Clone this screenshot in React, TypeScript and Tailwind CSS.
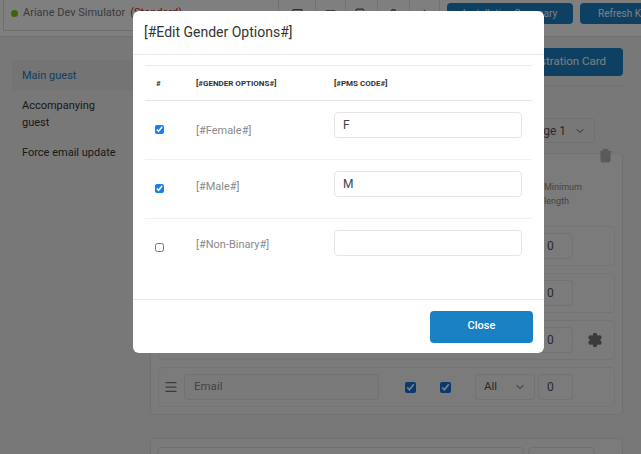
import { ArrowUp, ChevronDown, Copy, Menu, Settings, Square, Trash2, User } from 'lucide-react'

function FieldRow({ label, gear }: { label: string; gear?: boolean }) {
  return (
    <div className="flex h-[40px] items-center rounded-sm border border-[#e8e8e8] pl-[6px]">
      <Menu className="h-[12px] w-[12px] scale-125 text-[#777]" />
      <div className="ml-[7px] flex h-[26px] w-[195px] items-center rounded border border-[#e4e4e4] bg-[#f4f4f4] pl-[9px] text-[11.5px] text-[#888]">
        {label}
      </div>
      <input type="checkbox" readOnly checked className="ml-[26px] h-[11px] w-[11px] accent-[#1273de]" />
      <input type="checkbox" readOnly checked className="ml-[24px] h-[11px] w-[11px] accent-[#1273de]" />
      <div className="ml-[24px] flex h-[26px] w-[60px] items-center justify-between rounded border border-[#e4e4e4] px-2 text-[11.5px] text-[#555]">
        All
        <ChevronDown className="h-3 w-3" />
      </div>
      <div className="ml-[3px] flex h-[26px] w-[35px] items-center rounded border border-[#e4e4e4] pl-2 text-[12px] text-[#555]">0</div>
      {gear && <Settings className="ml-[14px] h-[16px] w-[16px] fill-[#777] text-[#777]" />}
    </div>
  )
}

function OptionRow({ checked, label, code, labelClass }: { checked: boolean; label: string; code: string; labelClass: string }) {
  return (
    <div className="flex h-[59px] border-b border-[#f0f0f0] last:border-b-0">
      <div className="w-[51px] pt-[24px] pl-[10px]">
        <input type="checkbox" readOnly checked={checked} className="block h-[9px] w-[9px] accent-[#1a7fe8]" />
      </div>
      <div className={`w-[138px] text-[11px] text-[#8a8a8a] ${labelClass}`}>{label}</div>
      <div className="pt-[11px]">
        <div className="flex h-[26px] w-[188px] items-center rounded border border-[#e4e4e4] bg-white pl-2 text-[12px] text-[#444]">
          {code}
        </div>
      </div>
    </div>
  )
}

const topIcons = [
  { Icon: Square, cell: 'w-[37px]' },
  { Icon: Menu, cell: 'w-[30px]' },
  { Icon: Copy, cell: 'w-[32px]' },
  { Icon: User, cell: 'w-[32px]' },
  { Icon: ArrowUp, cell: 'w-[30px]' },
]

export default function App() {
  return (
    <div className="relative h-[454px] w-[641px] overflow-hidden bg-[#f0f0f0] font-['Roboto',sans-serif] text-[#333]">
      {/* page behind the dialog */}
      <div className="flex h-[37px] border-b border-[#e5e5e5] bg-white">
        <div className="ml-[3px] flex h-[31px] w-[276px] items-center border-r border-b border-l border-[#ddd] pb-[3px] pl-[7px] text-[11px] text-[#777]">
          <span className="h-[7px] w-[7px] rounded-full bg-[#7ac70c]" />
          <span className="ml-[5px]">Ariane Dev Simulator</span>
          <span className="ml-[5px] text-[#c62828]">(Standard)</span>
        </div>
        {topIcons.map(({ Icon, cell }, i) => (
          <div key={i} className={`flex h-[36px] justify-center border-r border-[#e5e5e5] pt-[8px] ${cell}`}>
            <Icon className="h-[13px] w-[13px] text-[#555]" />
          </div>
        ))}
        <div className="ml-[7px] mt-[3px] flex h-[21px] w-[126px] items-center justify-center rounded-sm bg-[#1a80c4] text-[10px] text-white">
          Installation Summary
        </div>
        <div className="ml-[7px] mt-[3px] flex h-[21px] w-[61px] items-center overflow-hidden whitespace-nowrap rounded-l-sm bg-[#1a80c4] pl-[18px] text-[10px] text-white">
          Refresh Kiosk
        </div>
      </div>
      <div className="flex">
        <div className="w-[150px] shrink-0 pl-[12px] pt-[23px] text-[11px] leading-[17px]">
          <div className="flex h-[30px] items-center bg-[#e8e8e8] pl-[10px] text-[#1a80c4]">Main guest</div>
          <div className="mt-[7px] w-[106px] pl-[10px] text-[#333]">Accompanying guest</div>
          <div className="mt-[13px] pl-[10px] text-[#333]">Force email update</div>
        </div>
        <div className="w-[473px] pt-[11px]">
          <div className="flex justify-end">
            <div className="flex h-[28px] w-[150px] items-center justify-end rounded-sm bg-[#1a80c4] pr-[17px] text-[11.5px] text-white">
              Print Registration Card
            </div>
          </div>
          <div className="mt-[9px] border-t border-[#e5e5e5] pt-[32px]">
            <div className="flex justify-end pr-[28px]">
              <div className="flex h-[25px] w-[80px] items-center justify-end gap-[8px] rounded border border-[#e0e0e0] pr-2 text-[12px] text-[#555]">
                Page 1
                <ChevronDown className="h-3 w-3" />
              </div>
            </div>
            <div className="relative mt-[10px] rounded-sm border border-[#e3e3e3] bg-[#f7f7f7] px-[7px] pb-[7px] pt-[26px]">
              <Trash2 className="absolute right-[9px] top-[-6px] h-[15px] w-[15px] fill-[#b4b4b4] text-[#b4b4b4]" />
              <div className="flex h-[28px] justify-end pr-[29px] text-[9px] leading-[14px] text-[#888]">
                <span className="w-[42px]">Minimum length</span>
              </div>
              <div className="mt-[18px] flex flex-col gap-[7px]">
                <FieldRow label="First name" />
                <FieldRow label="Last name" />
                <FieldRow label="Gender" gear />
                <FieldRow label="Email" />
              </div>
            </div>
            <div className="mt-[23px] h-[60px] rounded-sm border border-[#e3e3e3] bg-[#f7f7f7] px-[6px] pt-[8px]">
              <div className="flex gap-[4px]">
                <div className="h-[26px] w-[367px] rounded border border-[#e0e0e0]" />
                <div className="h-[26px] w-[67px] rounded border border-[#e0e0e0]" />
              </div>
            </div>
          </div>
        </div>
      </div>

      {/* backdrop and dialog */}
      <div className="absolute inset-0 bg-black/50" />
      <div className="absolute left-[133px] top-[11px] flex h-[342px] w-[411px] flex-col rounded-md bg-white">
        <div className="flex h-[44px] shrink-0 items-center border-b border-[#e9e9e9] pl-[11px] text-[14px] text-[#333]">
          [#Edit Gender Options#]
        </div>
        <div className="mx-[12px] mt-[10px] flex-1 border-t border-[#ececec]">
          <div className="flex h-[35px] items-center border-b border-[#e4e4e4] pt-[2px] text-[8px] font-bold text-[#333]">
            <div className="w-[51px] pl-[11px]">#</div>
            <div className="w-[138px]">[#GENDER OPTIONS#]</div>
            <div>[#PMS CODE#]</div>
          </div>
          <OptionRow checked label="[#Female#]" code="F" labelClass="pt-[22px]" />
          <OptionRow checked label="[#Male#]" code="M" labelClass="pt-[19px]" />
          <OptionRow checked={false} label="[#Non-Binary#]" code="" labelClass="pt-[18px]" />
        </div>
        <div className="flex h-[54px] shrink-0 items-center justify-end border-t border-[#e9e9e9] pr-[11px]">
          <div className="flex h-[32px] w-[103px] items-center justify-center rounded-sm bg-[#1a80c4] text-[11px] font-medium text-white">
            Close
          </div>
        </div>
      </div>
    </div>
  )
}
